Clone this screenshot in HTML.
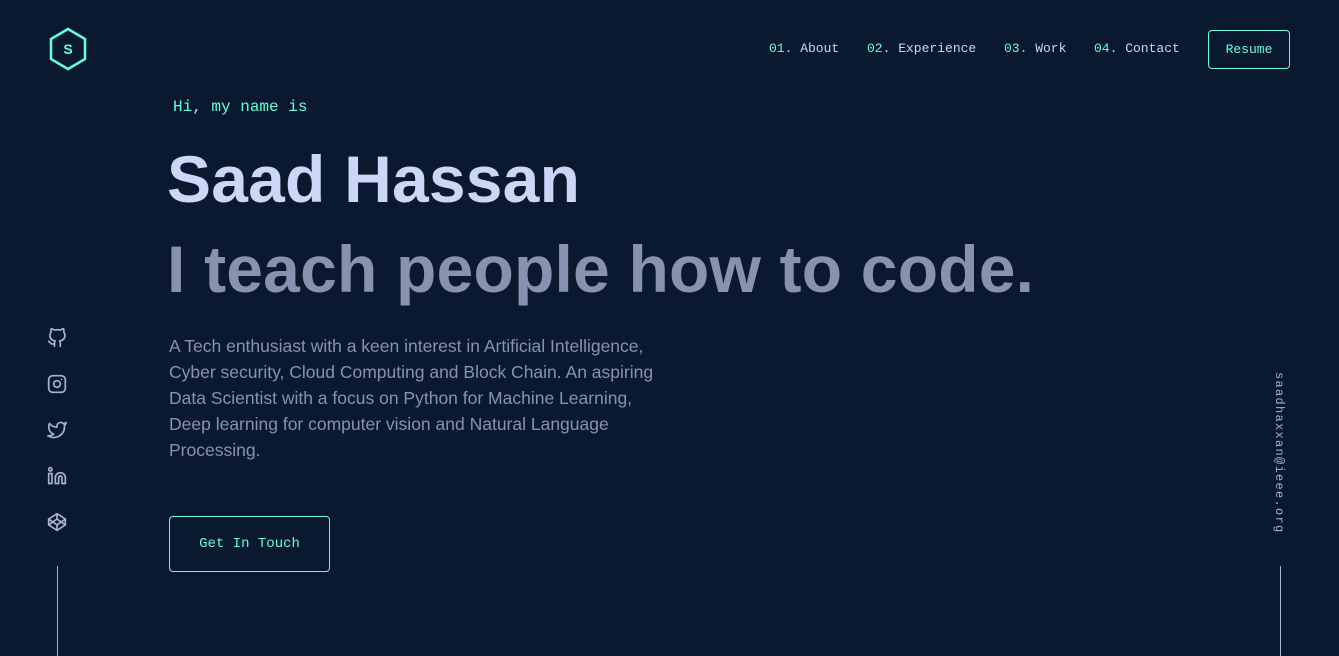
<!DOCTYPE html>
<html><head><meta charset="utf-8"><style>
*{margin:0;padding:0;box-sizing:border-box}
body{width:1339px;height:656px;background:#0a192f;overflow:hidden;position:relative;font-family:"Liberation Sans",sans-serif}
.mono{font-family:"Liberation Mono",monospace}
.nav{position:absolute;top:41px;font-size:13px;color:#ccd6f6}
.nav span{color:#64ffda}
.abs{position:absolute}
h1{position:absolute;left:167px;font-size:66px;font-weight:bold;letter-spacing:0.2px;white-space:nowrap;line-height:1}
p{position:absolute;left:169px;top:333px;width:500px;font-size:17.5px;line-height:26px;color:#8892b0}
svg.ic{position:absolute;left:47px;width:20px;height:20px;fill:none;stroke:#a8b2d1;stroke-width:2;stroke-linecap:round;stroke-linejoin:round}
</style></head><body>
<svg class="abs" style="left:48px;top:27px" width="40" height="44" viewBox="0 0 40 44"><polygon points="20,2 37,12 37,32 20,42 3,32 3,12" fill="none" stroke="#64ffda" stroke-width="2.5"/><text x="20" y="27" text-anchor="middle" fill="#64ffda" font-family="Liberation Sans" font-weight="bold" font-size="14">S</text></svg>
<div class="nav mono" style="left:769px"><span>01.</span> About</div>
<div class="nav mono" style="left:867px"><span>02.</span> Experience</div>
<div class="nav mono" style="left:1004px"><span>03.</span> Work</div>
<div class="nav mono" style="left:1094px"><span>04.</span> Contact</div>
<div class="abs mono" style="left:1208px;top:30px;width:82px;height:39px;border:1px solid #64ffda;border-radius:4px;color:#64ffda;font-size:13px;text-align:center;line-height:37px">Resume</div>
<div class="abs mono" style="left:173px;top:98px;font-size:16px;color:#64ffda">Hi, my name is</div>
<h1 style="top:146px;color:#ccd6f6">Saad Hassan</h1>
<h1 style="top:236px;color:#8892b0">I teach people how to code.</h1>
<p>A Tech enthusiast with a keen interest in Artificial Intelligence, Cyber security, Cloud Computing and Block Chain. An aspiring Data Scientist with a focus on Python for Machine Learning, Deep learning for computer vision and Natural Language Processing.</p>
<div class="abs mono" style="left:169px;top:516px;width:161px;height:56px;border:1px solid #64ffda;border-radius:4px;color:#64ffda;font-size:14px;text-align:center;line-height:54px">Get In Touch</div>
<svg class="ic" style="top:328px" viewBox="0 0 24 24"><path d="M9 19c-5 1.5-5-2.5-7-3m14 6v-3.87a3.37 3.37 0 0 0-.94-2.610c3.14-.35 6.44-1.54 6.44-7A5.440 5.440 0 0 0 20 4.77 5.07 5.07 0 0 0 19.91 1S18.73.65 16 2.48a13.38 13.38 0 0 0-7 0C6.27.65 5.09 1 5.09 1A5.07 5.07 0 0 0 5 4.770a5.44 5.44 0 0 0-1.5 3.78c0 5.42 3.3 6.61 6.44 7A3.37 3.37 0 0 0 9 18.13V22"/></svg>
<svg class="ic" style="top:374px" viewBox="0 0 24 24"><rect x="2" y="2" width="20" height="20" rx="5"/><circle cx="12" cy="12" r="4"/><line x1="17.5" y1="6.5" x2="17.5" y2="6.5"/></svg>
<svg class="ic" style="top:420px" viewBox="0 0 24 24"><path d="M23 3a10.9 10.9 0 0 1-3.14 1.53 4.48 4.48 0 0 0-7.86 3v1A10.66 10.66 0 0 1 3 4s-4 9 5 13a11.64 11.64 0 0 1-7 2c9 5 20 0 20-11.5a4.5 4.5 0 0 0-.08-.83A7.72 7.72 0 0 0 23 3z"/></svg>
<svg class="ic" style="top:466px" viewBox="0 0 24 24"><path d="M16 8a6 6 0 0 1 6 6v7h-4v-7a2 2 0 0 0-4 0v7h-4v-7a6 6 0 0 1 6-6z"/><rect x="2" y="9" width="4" height="12"/><circle cx="4" cy="4" r="2"/></svg>
<svg class="ic" style="top:512px" viewBox="0 0 24 24"><polygon points="12 2 22 8.5 22 15.5 12 22 2 15.5 2 8.5 12 2"/><line x1="12" y1="22" x2="12" y2="15.5"/><polyline points="22 8.5 12 15.5 2 8.5"/><polyline points="2 15.5 12 8.5 22 15.5"/><line x1="12" y1="2" x2="12" y2="8.5"/></svg>
<div class="abs" style="left:57px;top:566px;width:1px;height:90px;background:#a8b2d1"></div>
<div class="abs mono" style="left:1272px;top:372px;writing-mode:vertical-rl;font-size:12px;letter-spacing:1.3px;color:#a8b2d1">saadhaxxan@ieee.org</div>
<div class="abs" style="left:1280px;top:566px;width:1px;height:90px;background:#a8b2d1"></div>
</body></html>
